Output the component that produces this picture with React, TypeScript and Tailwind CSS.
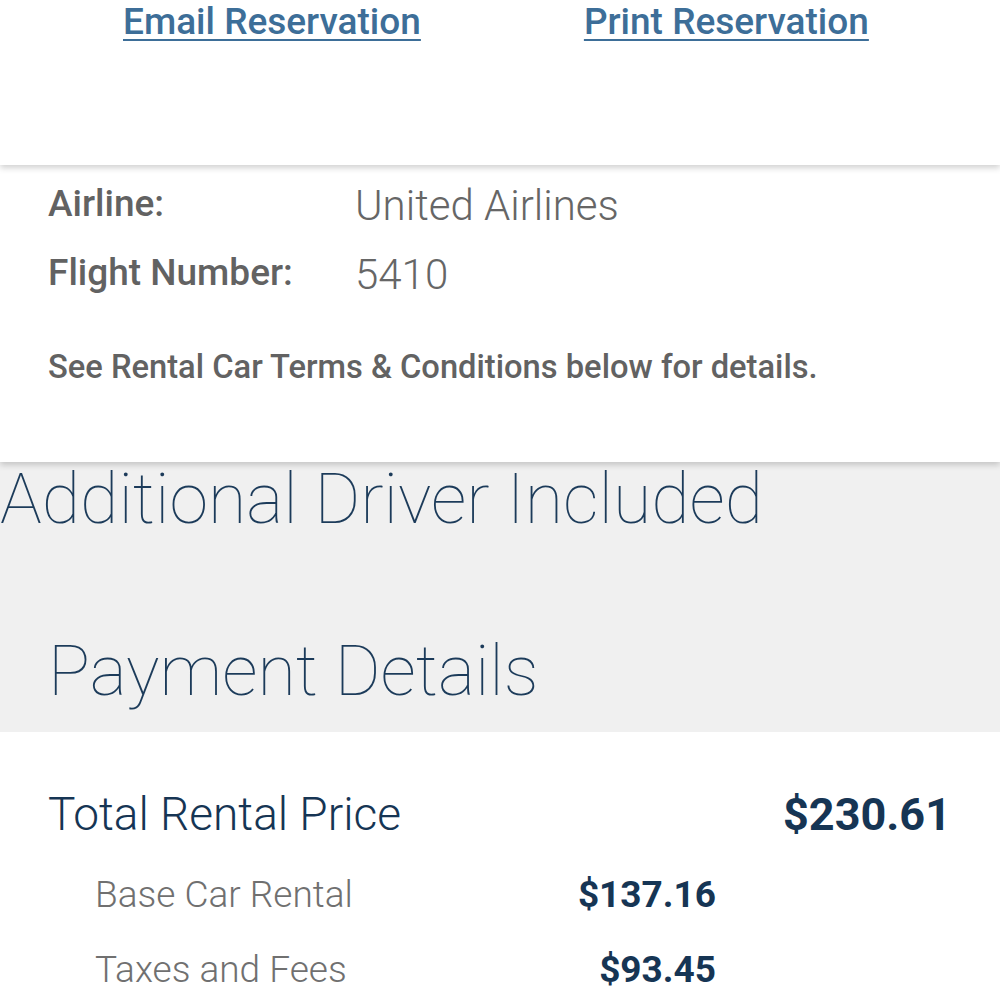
export default function App() {
  return (
    <div className="w-[1000px] h-[1000px] overflow-hidden bg-white font-['Roboto',sans-serif]">
      {/* actions card */}
      <div className="relative z-20 h-[165px] bg-white shadow-[0_3px_6px_rgba(0,0,0,0.18)]">
        <div className="flex pt-[3px] text-[37px] leading-none font-medium text-[#3d6e98]">
          <a href="#" className="ml-[123px] underline decoration-2 underline-offset-[5px]">
            Email Reservation
          </a>
          <a href="#" className="ml-[163px] underline decoration-2 underline-offset-[5px]">
            Print Reservation
          </a>
        </div>
      </div>

      {/* flight info card */}
      <div className="relative z-10 h-[297px] bg-white pt-[20px] pl-[48px] shadow-[0_3px_6px_rgba(0,0,0,0.18)]">
        <div className="flex h-[69px] items-start leading-none">
          <span className="w-[307px] text-[37px] font-medium text-[#626262]">Airline:</span>
          <span className="text-[42px] font-light text-[#666666]">United Airlines</span>
        </div>
        <div className="flex h-[69px] items-start leading-none">
          <span className="w-[307px] text-[37px] font-medium text-[#626262]">Flight Number:</span>
          <span className="text-[42px] font-light text-[#666666]">5410</span>
        </div>
        <p className="mt-[28px] text-[32.7px] leading-none font-medium text-[#626262]">
          See Rental Car Terms &amp; Conditions below for details.
        </p>
      </div>

      {/* section headers */}
      <div className="h-[270px] bg-[#f0f0f0] pt-[2px] text-[#1c3b5a]">
        <h2 className="text-[70px] leading-none font-thin">Additional Driver Included</h2>
        <h2 className="mt-[102px] pl-[48px] text-[70px] leading-none font-thin">Payment Details</h2>
      </div>

      {/* payment rows */}
      <div className="pt-[59px]">
        <div className="flex items-start justify-between pl-[48px] pr-[49px] leading-none text-[#163554]">
          <span className="text-[46px] font-light">Total Rental Price</span>
          <span className="mt-[1px] text-[45px] font-bold">$230.61</span>
        </div>
        <div className="mt-[39px] ml-[95px] w-[621px]">
          <div className="flex h-[75px] items-start justify-between leading-none">
            <span className="text-[37px] font-light text-[#707070]">Base Car Rental</span>
            <span className="text-[37px] font-bold text-[#163554]">$137.16</span>
          </div>
          <div className="flex h-[75px] items-start justify-between leading-none">
            <span className="text-[37px] font-light text-[#707070]">Taxes and Fees</span>
            <span className="text-[37px] font-bold text-[#163554]">$93.45</span>
          </div>
        </div>
      </div>
    </div>
  );
}
